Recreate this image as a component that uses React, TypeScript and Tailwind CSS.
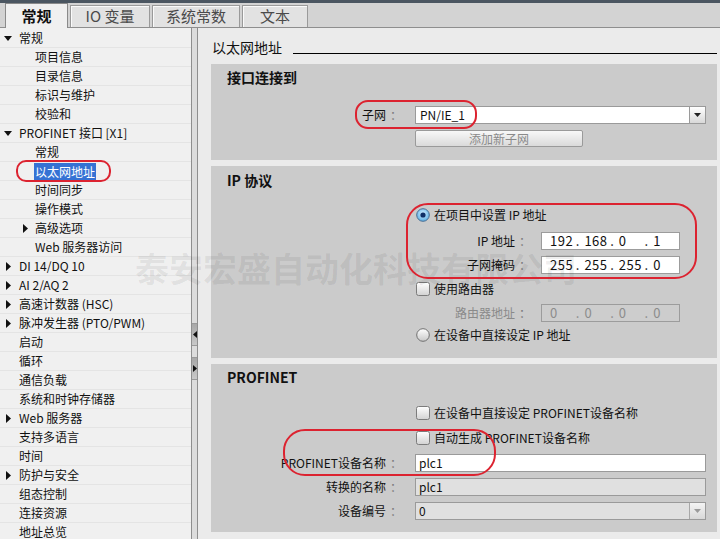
import React from 'react';

const FONT = "font-['Noto_Sans_CJK_SC','Liberation_Sans',sans-serif]";

type Item = { t: string; lvl: 0 | 1; tri?: 'down' | 'right'; sel?: boolean };

const items: Item[] = [
  { t: '常规', lvl: 0, tri: 'down' },
  { t: '项目信息', lvl: 1 },
  { t: '目录信息', lvl: 1 },
  { t: '标识与维护', lvl: 1 },
  { t: '校验和', lvl: 1 },
  { t: 'PROFINET 接口 [X1]', lvl: 0, tri: 'down' },
  { t: '常规', lvl: 1 },
  { t: '以太网地址', lvl: 1, sel: true },
  { t: '时间同步', lvl: 1 },
  { t: '操作模式', lvl: 1 },
  { t: '高级选项', lvl: 1, tri: 'right' },
  { t: 'Web 服务器访问', lvl: 1 },
  { t: 'DI 14/DQ 10', lvl: 0, tri: 'right' },
  { t: 'AI 2/AQ 2', lvl: 0, tri: 'right' },
  { t: '高速计数器 (HSC)', lvl: 0, tri: 'right' },
  { t: '脉冲发生器 (PTO/PWM)', lvl: 0, tri: 'right' },
  { t: '启动', lvl: 0 },
  { t: '循环', lvl: 0 },
  { t: '通信负载', lvl: 0 },
  { t: '系统和时钟存储器', lvl: 0 },
  { t: 'Web 服务器', lvl: 0, tri: 'right' },
  { t: '支持多语言', lvl: 0 },
  { t: '时间', lvl: 0 },
  { t: '防护与安全', lvl: 0, tri: 'right' },
  { t: '组态控制', lvl: 0 },
  { t: '连接资源', lvl: 0 },
  { t: '地址总览', lvl: 0 },
];

function TriDown() {
  return (
    <svg width="8" height="5" viewBox="0 0 8 5">
      <path d="M0 0H8L4 5Z" fill="#111" />
    </svg>
  );
}
function TriRight() {
  return (
    <svg width="5" height="9" viewBox="0 0 5 9">
      <path d="M0 0L5 4.5L0 9Z" fill="#111" />
    </svg>
  );
}

function TreeRow({ it }: { it: Item }) {
  return (
    <div className="h-[19px] border-b border-[#e4e4e4] flex items-center">
      {it.lvl === 0 ? (
        <div className={'w-[19px] flex items-center ' + (it.tri === 'down' ? 'pl-[4px]' : 'pl-[6px]')}>
          {it.tri === 'down' && <TriDown />}
          {it.tri === 'right' && <TriRight />}
        </div>
      ) : (
        <div className="w-[35px] flex items-center pl-[23px]">{it.tri === 'right' && <TriRight />}</div>
      )}
      {it.sel ? (
        <span className="bg-[#3572d4] text-white text-[12px] leading-[17px] px-[1px] -ml-[1px]">{it.t}</span>
      ) : (
        <span className="text-[12px] leading-[18px] text-[#111] whitespace-nowrap">{it.t}</span>
      )}
    </div>
  );
}

function Radio({ checked }: { checked?: boolean }) {
  return checked ? (
    <svg width="14" height="14" viewBox="0 0 14 14">
      <defs>
        <radialGradient id="rg1" cx="50%" cy="40%" r="60%">
          <stop offset="0" stopColor="#d8f0ff" />
          <stop offset="1" stopColor="#5aaee4" />
        </radialGradient>
      </defs>
      <circle cx="7" cy="7" r="6.3" fill="url(#rg1)" stroke="#4c6e92" strokeWidth="1" />
      <circle cx="7" cy="7" r="2.6" fill="#0f2f66" />
    </svg>
  ) : (
    <svg width="14" height="14" viewBox="0 0 14 14">
      <defs>
        <linearGradient id="rg2" x1="0" y1="0" x2="0" y2="1">
          <stop offset="0" stopColor="#ffffff" />
          <stop offset="1" stopColor="#c8c8c8" />
        </linearGradient>
      </defs>
      <circle cx="7" cy="7" r="6.3" fill="url(#rg2)" stroke="#707070" strokeWidth="1" />
    </svg>
  );
}

function Check() {
  return (
    <svg width="14" height="14" viewBox="0 0 14 14">
      <defs>
        <linearGradient id="cg" x1="0" y1="0" x2="0" y2="1">
          <stop offset="0" stopColor="#ffffff" />
          <stop offset="1" stopColor="#d2d2d2" />
        </linearGradient>
      </defs>
      <rect x="0.5" y="0.5" width="13" height="13" rx="2" fill="url(#cg)" stroke="#7c7c7c" />
    </svg>
  );
}

function DropTri({ color }: { color: string }) {
  return (
    <svg width="7" height="4" viewBox="0 0 7 4">
      <path d="M0 0H7L3.5 4Z" fill={color} />
    </svg>
  );
}

function Colon() {
  return <span className="text-[#7a7a7a] ml-[4px]">：</span>;
}

function IP({ vals, disabled }: { vals: string[]; disabled?: boolean }) {
  return (
    <div
      className={
        'w-[139px] h-[18px] border flex items-center pl-[8px] text-[13px] leading-[16px] tracking-[0.5px] ' +
        (disabled ? 'border-[#9c9c9c] bg-[#cdcdcd] text-[#8c8c8c]' : 'border-[#9c9c9c] bg-white text-[#111]')
      }
    >
      {vals.map((v, i) => (
        <React.Fragment key={i}>
          <span className="w-[27px]">{v}</span>
          {i < 3 && <span className="w-[9px]">.</span>}
        </React.Fragment>
      ))}
    </div>
  );
}

function SectionHeader({ children }: { children: React.ReactNode }) {
  return <div className="h-[18px] pl-[16px] text-[14px] leading-[18px] font-bold text-[#111]">{children}</div>;
}

export default function App() {
  return (
    <div className={'relative w-[720px] h-[539px] overflow-hidden flex flex-col bg-[#ebebeb] ' + FONT}>
      {/* Tab bar */}
      <div className="h-[28px] shrink-0 flex flex-col bg-[#d3d3d3]">
        <div className="h-[3px] bg-[#4b5661]" />
        <div className="flex-1 flex items-end pl-[5px] border-b border-[#8e8e8e] gap-[2px]">
          <div className="w-[63px] h-[25px] bg-[#f0f0f0] border border-b-0 border-[#8a8a8a] flex items-center justify-center text-[15px] font-bold text-[#111] -mb-px">
            常规
          </div>
          <div className="w-[80px] h-[22px] bg-[#e2e2e2] border border-b-0 border-[#9a9a9a] shadow-[inset_1px_1px_0_#fafafa] flex items-center justify-center text-[15px] text-[#4a4a4a]">
            IO 变量
          </div>
          <div className="w-[88px] h-[22px] bg-[#e2e2e2] border border-b-0 border-[#9a9a9a] shadow-[inset_1px_1px_0_#fafafa] flex items-center justify-center text-[15px] text-[#4a4a4a]">
            系统常数
          </div>
          <div className="w-[66px] h-[22px] bg-[#e2e2e2] border border-b-0 border-[#9a9a9a] shadow-[inset_1px_1px_0_#fafafa] flex items-center justify-center text-[15px] text-[#4a4a4a]">
            文本
          </div>
        </div>
      </div>

      {/* Body */}
      <div className="flex-1 flex min-h-0">
        {/* Left tree */}
        <div className="w-[191px] shrink-0 bg-[#f0f0f0] overflow-hidden pt-[1px]">
          {items.map((it, i) => (
            <TreeRow key={i} it={it} />
          ))}
        </div>

        {/* Splitter */}
        <div className="w-[7px] shrink-0 border-x border-[#8e8e8e] bg-[#dcdcdc] flex flex-col pt-[295px] gap-[11px]">
          <div className="h-[23px] border-y border-[#9a9a9a] bg-gradient-to-b from-[#a8a8a8] to-[#c8c8c8] flex items-center justify-center">
            <svg width="4" height="7" viewBox="0 0 4 7">
              <path d="M4 0V7L0 3.5Z" fill="#111" />
            </svg>
          </div>
          <div className="h-[23px] border-y border-[#9a9a9a] bg-gradient-to-b from-[#a8a8a8] to-[#c8c8c8] flex items-center justify-center">
            <svg width="4" height="7" viewBox="0 0 4 7">
              <path d="M0 0V7L4 3.5Z" fill="#111" />
            </svg>
          </div>
        </div>

        {/* Right panel */}
        <div className="flex-1 flex flex-col pl-[13px] pr-[3px] pt-[10px] bg-[#ebebeb] text-[#111]">
          <div className="h-[18px] flex items-end">
            <span className="pl-[1px] text-[14px] leading-[18px] text-[#111]">以太网地址</span>
            <div className="flex-1 h-px bg-black ml-[11px] mb-[2px]" />
          </div>

          {/* Section 1 */}
          <div className="mt-[8px] h-[96px] bg-[#cbcbcb] flex flex-col pt-[4px]">
            <SectionHeader>接口连接到</SectionHeader>
            <div className="mt-[20px] flex items-center">
              <div className="w-[204px] text-right pr-[13px] text-[12px] leading-[18px]">
                子网<Colon />
              </div>
              <div className="w-[291px] h-[18px] border border-[#9a9a9a] bg-white flex">
                <div className="flex-1 pl-[4px] text-[12px] leading-[16px]">PN/IE_1</div>
                <div className="w-[16px] border-l border-[#9a9a9a] bg-gradient-to-b from-white to-[#d8d8d8] flex items-center justify-center">
                  <DropTri color="#222" />
                </div>
              </div>
            </div>
            <div className="mt-[6px] ml-[204px] w-[168px] h-[17px] border border-[#9a9a9a] rounded-[2px] bg-gradient-to-b from-[#f8f8f8] to-[#dadada] flex items-center justify-center text-[12px] text-[#8a8a8a]">
              添加新子网
            </div>
          </div>

          {/* Section 2 */}
          <div className="mt-[6px] h-[192px] bg-[#cbcbcb] flex flex-col pt-[5px]">
            <SectionHeader>IP 协议</SectionHeader>
            <div className="mt-[18px] ml-[205px] h-[16px] flex items-center gap-[4px] text-[12px]">
              <Radio checked />
              <span>在项目中设置 IP 地址</span>
            </div>
            <div className="mt-[9px] flex items-center">
              <div className="w-[330px] text-right pr-[10px] text-[12px] leading-[18px]">
                IP 地址<Colon />
              </div>
              <IP vals={['192', '168', '0', '1']} />
            </div>
            <div className="mt-[6px] flex items-center">
              <div className="w-[330px] text-right pr-[10px] text-[12px] leading-[18px]">
                子网掩码<Colon />
              </div>
              <IP vals={['255', '255', '255', '0']} />
            </div>
            <div className="mt-[7px] ml-[205px] h-[16px] flex items-center gap-[4px] text-[12px]">
              <Check />
              <span>使用路由器</span>
            </div>
            <div className="mt-[7px] flex items-center">
              <div className="w-[330px] text-right pr-[10px] text-[12px] leading-[18px] text-[#8a8a8a]">
                路由器地址<Colon />
              </div>
              <IP vals={['0', '0', '0', '0']} disabled />
            </div>
            <div className="mt-[5px] ml-[205px] h-[16px] flex items-center gap-[4px] text-[12px]">
              <Radio />
              <span>在设备中直接设定 IP 地址</span>
            </div>
          </div>

          {/* Section 3 */}
          <div className="mt-[6px] h-[168px] bg-[#cbcbcb] flex flex-col pt-[4px]">
            <SectionHeader>PROFINET</SectionHeader>
            <div className="mt-[19px] ml-[205px] h-[16px] flex items-center gap-[4px] text-[12px]">
              <Check />
              <span>在设备中直接设定 PROFINET设备名称</span>
            </div>
            <div className="mt-[9px] ml-[205px] h-[16px] flex items-center gap-[4px] text-[12px]">
              <Check />
              <span>自动生成 PROFINET设备名称</span>
            </div>
            <div className="mt-[8px] flex items-center">
              <div className="w-[204px] text-right pr-[13px] text-[12px] leading-[18px]">
                PROFINET设备名称<Colon />
              </div>
              <div className="w-[291px] h-[18px] border border-[#9a9a9a] bg-white pl-[3px] text-[12px] leading-[16px]">plc1</div>
            </div>
            <div className="mt-[6px] flex items-center">
              <div className="w-[204px] text-right pr-[13px] text-[12px] leading-[18px]">
                转换的名称<Colon />
              </div>
              <div className="w-[291px] h-[18px] border border-[#9a9a9a] bg-[#e0e0e0] pl-[3px] text-[12px] leading-[16px]">plc1</div>
            </div>
            <div className="mt-[6px] flex items-center">
              <div className="w-[204px] text-right pr-[13px] text-[12px] leading-[18px]">
                设备编号<Colon />
              </div>
              <div className="w-[291px] h-[18px] border border-[#9a9a9a] bg-[#e0e0e0] flex">
                <div className="flex-1 pl-[3px] text-[12px] leading-[16px]">0</div>
                <div className="w-[16px] border-l border-[#a8a8a8] bg-gradient-to-b from-[#f4f4f4] to-[#d8d8d8] flex items-center justify-center">
                  <DropTri color="#9a9a9a" />
                </div>
              </div>
            </div>
          </div>
        </div>
      </div>

      {/* Watermark */}
      <div className="absolute left-[135px] top-[246px] text-[34px] leading-[44px] font-bold text-[rgba(0,0,0,0.07)] whitespace-nowrap pointer-events-none">
        泰安宏盛自动化科技有限公司
      </div>

      {/* Red annotation outlines */}
      <div className="absolute left-[16px] top-[160px] w-[95px] h-[22px] border-2 border-[#dc2330] rounded-[10px] pointer-events-none" />
      <div className="absolute left-[355px] top-[100px] w-[122px] h-[29px] border-2 border-[#dc2330] rounded-[13px] pointer-events-none" />
      <div className="absolute left-[406px] top-[203px] w-[291px] h-[76px] border-2 border-[#dc2330] rounded-[22px] pointer-events-none" />
      <div className="absolute left-[283px] top-[429px] w-[213px] h-[47px] border-2 border-[#dc2330] rounded-[22px] pointer-events-none" />
    </div>
  );
}
